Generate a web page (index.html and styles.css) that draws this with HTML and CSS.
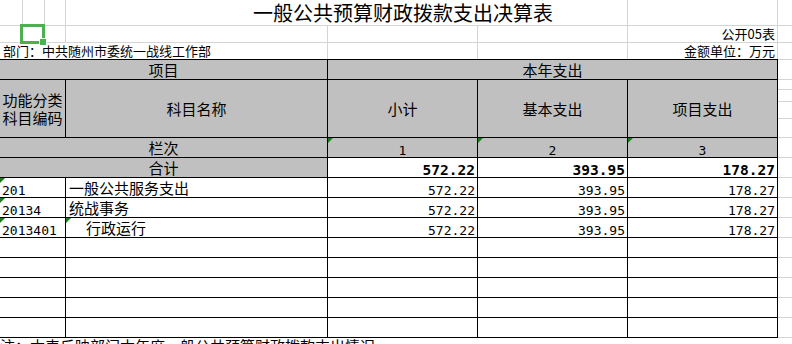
FILE: index.html
```html
<!DOCTYPE html>
<html lang="zh-CN">
<head>
<meta charset="utf-8">
<title>一般公共预算财政拨款支出决算表</title>
<link rel="stylesheet" href="styles.css">
</head>
<body>
<div class="top">
  <div class="g"></div><div class="g"></div><div class="g"></div>
  <div class="g title">一般公共预算财政拨款支出决算表</div>
  <div class="g"></div>
  <div class="gx"></div>

  <div class="g"></div><div class="g"></div><div class="g"></div>
  <div class="g"></div><div class="g"></div><div class="g"></div>
  <div class="g ra">公开05表</div>
  <div class="gx"></div>

  <div class="gr dept">部门：中共随州市委统一战线工作部</div>
  <div class="gr"></div><div class="gr"></div>
  <div class="gr ra">金额单位：万元</div>
  <div></div>
</div>

<div class="body">
  <div class="tbl">
    <div class="c h s2">项目</div>
    <div class="c h s3">本年支出</div>

    <div class="c h two">功能分类<br>科目编码</div>
    <div class="c h">科目名称</div>
    <div class="c h">小计</div>
    <div class="c h">基本支出</div>
    <div class="c h">项目支出</div>

    <div class="c h s2 bot">栏次</div>
    <div class="c h n nc tri">1</div>
    <div class="c h n nc tri">2</div>
    <div class="c h n nc tri">3</div>

    <div class="c h s2">合计</div>
    <div class="c n b">572.22</div>
    <div class="c n b">393.95</div>
    <div class="c n b">178.27</div>

    <div class="c n code tri">201</div>
    <div class="c l">一般公共服务支出</div>
    <div class="c n">572.22</div>
    <div class="c n">393.95</div>
    <div class="c n">178.27</div>

    <div class="c n code tri">20134</div>
    <div class="c l">统战事务</div>
    <div class="c n">572.22</div>
    <div class="c n">393.95</div>
    <div class="c n">178.27</div>

    <div class="c n code tri">2013401</div>
    <div class="c l ind tri">行政运行</div>
    <div class="c n">572.22</div>
    <div class="c n">393.95</div>
    <div class="c n">178.27</div>

    <div class="c"></div><div class="c"></div><div class="c"></div><div class="c"></div><div class="c"></div>
    <div class="c"></div><div class="c"></div><div class="c"></div><div class="c"></div><div class="c"></div>
    <div class="c"></div><div class="c"></div><div class="c"></div><div class="c"></div><div class="c"></div>
    <div class="c"></div><div class="c"></div><div class="c"></div><div class="c"></div><div class="c"></div>
    <div class="c"></div><div class="c"></div><div class="c"></div><div class="c"></div><div class="c"></div>
  </div>
  <div class="fill">
    <div class="f f20"></div>
    <div class="f f10"></div>
    <div class="f f12"></div>
    <div class="f f17"></div>
    <div class="f f19"></div>
    <div class="f f20"></div><div class="f f20"></div><div class="f f20"></div>
    <div class="f f20"></div><div class="f f20"></div><div class="f f20"></div>
    <div class="f f20"></div><div class="f f20"></div><div class="f f20"></div>
    <div class="f f20"></div>
  </div>
</div>

<div class="note">注：本表反映部门本年度一般公共预算财政拨款支出情况。</div>

<div class="sel"></div>
</body>
</html>
```

FILE: styles.css
```css
* { box-sizing: border-box; }

html, body {
  margin: 0;
  padding: 0;
  background: #fff;
}

body {
  width: 792px;
  height: 344px;
  overflow: hidden;
  position: relative;
  color: #000;
  font-family: "Noto Sans CJK SC", "Noto Sans", sans-serif;
}

/* sheet area above the table */
.top {
  display: grid;
  grid-template-columns: 23px 22px 21px 262px 150px 150px 150px 14px;
  grid-template-rows: 26px 17px 16px;
}

.g {
  border-right: 1px solid #d4d4d4;
  border-bottom: 1px solid #d4d4d4;
}

.gx { border-bottom: 1px solid #d4d4d4; }

.gr { border-right: 1px solid #d4d4d4; }

.title {
  grid-column: span 3;
  font-size: 20px;
  line-height: 25px;
  padding-left: 113px;
  text-align: center;
  white-space: nowrap;
}

.ra {
  font-size: 13px;
  line-height: 16px;
  text-align: right;
  padding-right: 2px;
  white-space: nowrap;
}

.dept {
  grid-column: span 4;
  font-size: 13px;
  line-height: 16px;
  padding-left: 3px;
  white-space: nowrap;
}

/* table */
.body {
  display: flex;
}

.tbl {
  display: grid;
  grid-template-columns: 66px 262px 150px 150px 150px;
  grid-template-rows: 20px 58px repeat(10, 20px);
  border-top: 1px solid #000;
  width: 778px;
  flex: none;
}

.c {
  border-right: 1px solid #000;
  border-bottom: 1px solid #000;
  display: flex;
  align-items: center;
  justify-content: center;
  font-size: 15px;
  line-height: 18px;
  white-space: nowrap;
  position: relative;
}

.h { background: #c0c0c0; }

.s2 { grid-column: span 2; }
.s3 { grid-column: span 3; }

.two {
  text-align: center;
  line-height: 17.5px;
}

.bot {
  align-items: flex-end;
  line-height: 15px;
  padding-bottom: 2px;
}

.l {
  justify-content: flex-start;
  align-items: flex-end;
  padding-left: 3px;
  line-height: 15px;
  padding-bottom: 2px;
}

.ind { padding-left: 20px; }

.n {
  font-family: "DejaVu Sans Mono", "Liberation Mono", monospace;
  font-size: 13px;
  line-height: 13px;
  justify-content: flex-end;
  align-items: flex-end;
  padding-right: 2px;
}

.nc {
  justify-content: center;
  padding-right: 0;
}

.code {
  justify-content: flex-start;
  padding-left: 2px;
  padding-right: 0;
}

.b {
  font-weight: bold;
  font-size: 14.5px;
  line-height: 14px;
}

.tri::before {
  content: "";
  position: absolute;
  left: 0;
  top: 0;
  border-top: 5px solid #1a7f1a;
  border-right: 5px solid transparent;
}

/* gridlines right of the table */
.fill {
  width: 14px;
  flex: none;
  border-top: 1px solid #d4d4d4;
}

.f { border-bottom: 1px solid #d4d4d4; }
.f10 { height: 10px; }
.f12 { height: 12px; }
.f17 { height: 17px; }
.f19 { height: 19px; }
.f20 { height: 20px; }

.note {
  font-size: 15px;
  line-height: 15px;
  white-space: nowrap;
}

/* active cell selection */
.sel {
  position: absolute;
  left: 20px;
  top: 24px;
  width: 25px;
  height: 20px;
  border: 3px solid #4caf50;
}

.sel::after {
  content: "";
  position: absolute;
  right: -5px;
  bottom: -5px;
  width: 6px;
  height: 6px;
  background: #4caf50;
  border: 1px solid #fff;
}
```
